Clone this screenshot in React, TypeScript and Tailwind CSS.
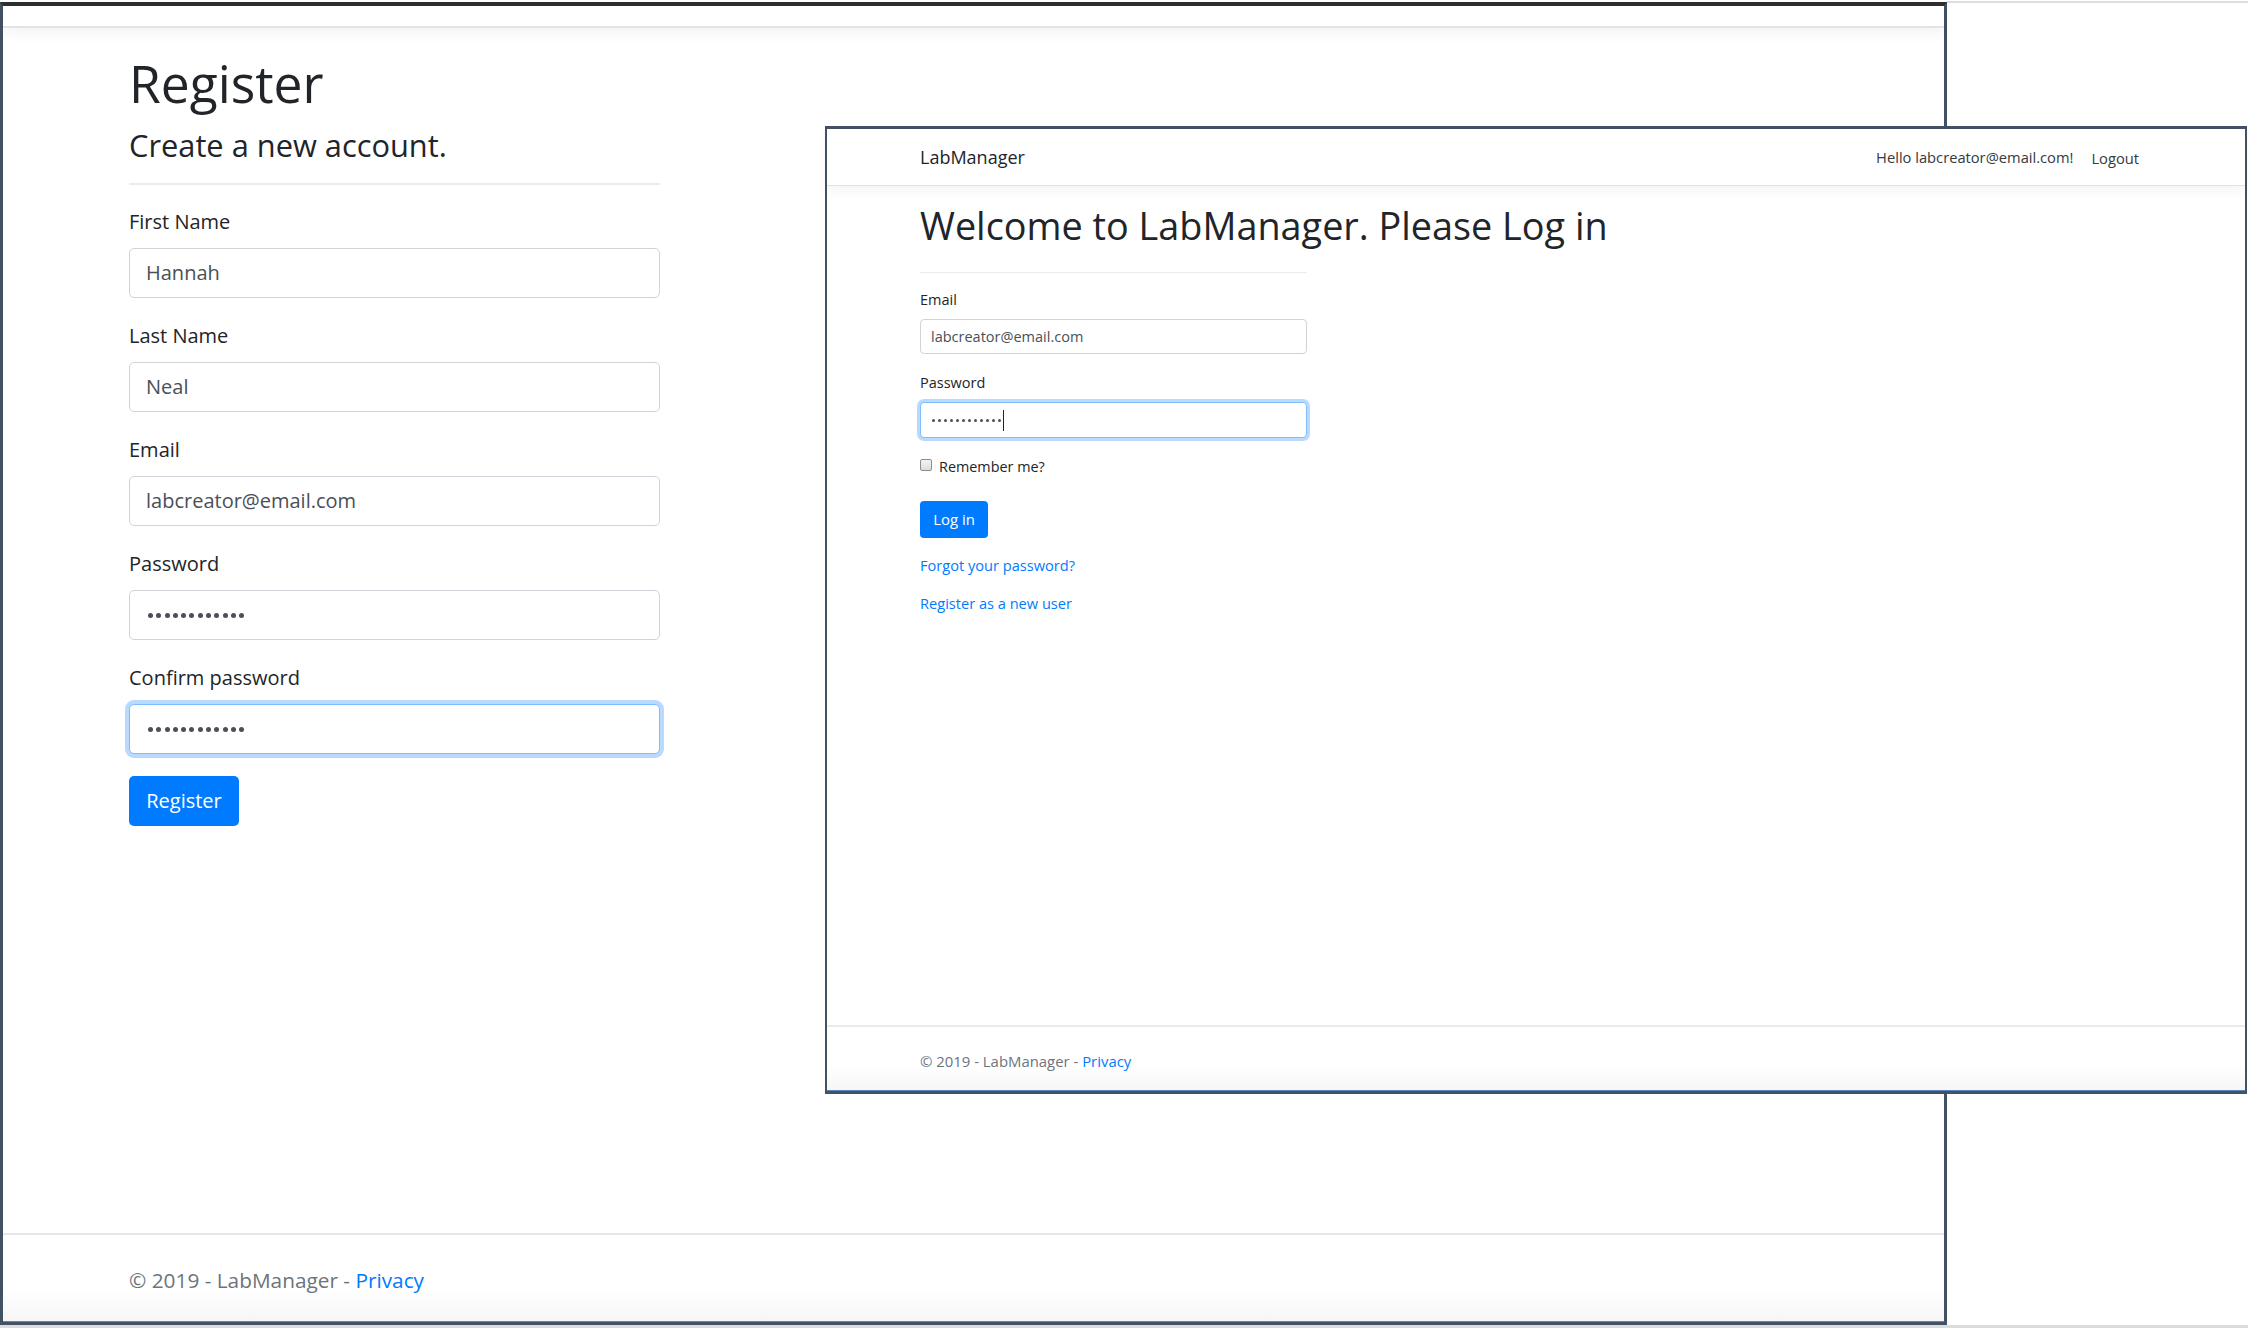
import type { ReactNode } from 'react';

function Dots({ big }: { big?: boolean }) {
  return (
    <div className={big ? 'ml-[2px] flex items-center gap-[3.3px]' : 'ml-[1px] flex items-center gap-[3px]'}>
      {Array.from({ length: 12 }).map((_, i) => (
        <span
          key={i}
          className={big ? 'h-[5px] w-[5px] rounded-full bg-[#495057]' : 'h-[3px] w-[3px] rounded-full bg-[#495057]'}
        />
      ))}
    </div>
  );
}

function RegField({ label, focused, children }: { label: string; focused?: boolean; children: ReactNode }) {
  return (
    <div>
      <div className="mb-[14px] text-[20px] leading-[24px] text-[#212529]">{label}</div>
      <div
        className={
          focused
            ? 'flex h-[50px] w-[531px] items-center rounded-[5px] border border-[#80bdff] bg-white pl-[16px] text-[20px] text-[#495057] shadow-[0_0_0_4px_rgba(0,123,255,0.28)]'
            : 'flex h-[50px] w-[531px] items-center rounded-[5px] border border-[#ced4da] bg-white pl-[16px] text-[20px] text-[#495057]'
        }
      >
        {children}
      </div>
    </div>
  );
}

function LoginField({ label, focused, children }: { label: string; focused?: boolean; children: ReactNode }) {
  return (
    <div>
      <div className="mb-[9px] text-[14.5px] leading-[20px] text-[#212529]">{label}</div>
      <div
        className={
          focused
            ? 'flex h-[36px] w-[387px] items-center rounded-[4px] border border-[#80bdff] bg-white pl-[10px] text-[14.5px] text-[#495057] shadow-[0_0_0_3px_rgba(0,123,255,0.28)]'
            : 'flex h-[35px] w-[387px] items-center rounded-[4px] border border-[#ced4da] bg-white pl-[10px] text-[14.5px] text-[#495057]'
        }
      >
        {children}
      </div>
    </div>
  );
}

function RegisterWindow() {
  return (
    <div className="mt-[2px] flex h-[1323px] w-[1947px] shrink-0 flex-col border-x-[3px] border-b-[3px] border-t-[4px] border-[#435165] border-t-[#2e2f31] bg-white">
      <div className="relative z-10 h-[22px] border-b-2 border-[#e1e5ea] bg-white shadow-[0_5px_14px_rgba(0,0,0,0.05)]" />

      <main className="flex-1 pl-[126px] pt-[25px]">
        <h1 className="text-[51.5px] leading-[60px] font-normal text-[#212529]">Register</h1>
        <h4 className="mt-[14px] text-[30.8px] leading-[36px] font-normal text-[#212529]">Create a new account.</h4>
        <hr className="mt-[20px] w-[531px] border-t-2 border-[#ebebeb]" />

        <div className="mt-[25px] flex flex-col gap-[26px]">
          <RegField label="First Name">Hannah</RegField>
          <RegField label="Last Name">Neal</RegField>
          <RegField label="Email">labcreator@email.com</RegField>
          <RegField label="Password">
            <Dots big />
          </RegField>
          <RegField label="Confirm password" focused>
            <Dots big />
          </RegField>
        </div>

        <button className="mt-[22px] flex h-[50px] w-[110px] items-center justify-center rounded-[5px] bg-[#007bff] text-[20px] text-white">
          Register
        </button>
      </main>

      <footer className="h-[89px] border-t-2 border-[#e4e6e9] bg-linear-to-b from-white from-60% to-[#f6f6f6] pl-[126px] pt-[30px] shadow-[inset_0_-1px_0_#5a87c2]">
        <p className="text-[20.8px] leading-[30px] text-[#6c757d]">
          © 2019 - LabManager - <a className="text-[#007bff]">Privacy</a>
        </p>
      </footer>
    </div>
  );
}

function LoginWindow() {
  return (
    <div className="absolute left-[825px] top-[126px] flex h-[968px] w-[1422px] flex-col border-x-2 border-b-[3px] border-t-[3px] border-[#435165] bg-white">
      <nav className="relative z-10 flex h-[57px] items-center justify-between border-b border-[#dee2e6] bg-white pl-[93px] pr-[106px] shadow-[0_4px_12px_rgba(0,0,0,0.05)]">
        <span className="text-[18px] leading-[24px] text-[#212529]">LabManager</span>
        <div className="flex items-center gap-[18px] text-[14.7px] leading-[20px] text-[#343a40]">
          <span>Hello labcreator@email.com!</span>
          <span className="mt-[2px]">Logout</span>
        </div>
      </nav>

      <main className="flex-1 pl-[93px] pt-[18px]">
        <h1 className="text-[37.8px] leading-[44px] font-normal text-[#212529]">Welcome to LabManager. Please Log in</h1>
        <hr className="mt-[24px] w-[387px] border-t border-[#e9ecef]" />

        <div className="mt-[17px] flex flex-col gap-[19px]">
          <LoginField label="Email">labcreator@email.com</LoginField>
          <LoginField label="Password" focused>
            <Dots />
            <span className="ml-[2px] h-[21px] w-px bg-[#212529]" />
          </LoginField>
        </div>

        <label className="mt-[19px] flex items-start gap-[7px] text-[14.4px] leading-[20px] text-[#212529]">
          <span className="mt-[2px] h-[12px] w-[12px] rounded-[2px] border border-[#8d8d8d] bg-linear-to-b from-[#f4f4f4] to-[#dcdcdc]" />
          Remember me?
        </label>

        <button className="mt-[24px] flex h-[37px] w-[68px] items-center justify-center rounded-[4px] bg-[#007bff] text-[14.9px] text-white">
          Log in
        </button>

        <p className="mt-[17px] text-[14.6px] leading-[20px] text-[#007bff]">Forgot your password?</p>
        <p className="mt-[18px] text-[14.6px] leading-[20px] text-[#007bff]">Register as a new user</p>
      </main>

      <footer className="h-[66px] border-t-2 border-[#ebebeb] bg-linear-to-b from-white from-60% to-[#f6f6f6] pl-[93px] pt-[24px] shadow-[inset_0_-1px_0_#5a87c2]">
        <p className="text-[14.9px] leading-[20px] text-[#6c757d]">
          © 2019 - LabManager - <a className="text-[#007bff]">Privacy</a>
        </p>
      </footer>
    </div>
  );
}

export default function App() {
  return (
    <div className="relative h-[1328px] w-[2248px] overflow-hidden bg-white font-['Open_Sans',sans-serif]">
      <div className="flex">
        <RegisterWindow />
        <div className="mt-[1px] h-[2px] flex-1 bg-[#dedede]" />
      </div>
      <div className="h-[3px] bg-[#dcdcdc]" />
      <LoginWindow />
    </div>
  );
}
